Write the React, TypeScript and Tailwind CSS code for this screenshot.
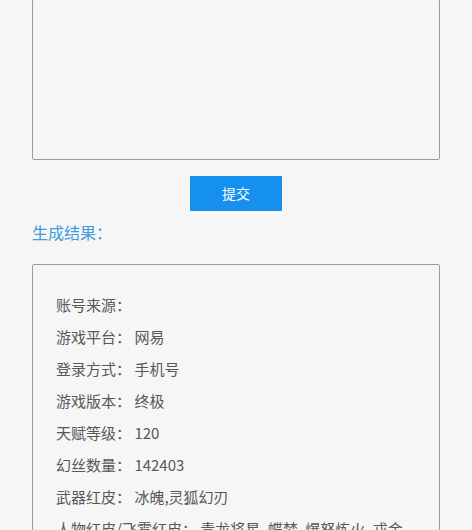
import React from 'react'

const rows = [
    { label: "账号来源", value: "" },
    { label: "游戏平台", value: "网易" },
    { label: "登录方式", value: "手机号" },
    { label: "游戏版本", value: "终极" },
    { label: "天赋等级", value: "120" },
    { label: "幻丝数量", value: "142403" },
    { label: "武器红皮", value: "冰魄,灵狐幻刃" },
    { label: "人物红皮/飞雾红皮", value: "青龙将星, 蝶梦, 爆怒炼火, 戎金" },
];

export default function App() {
    return (
        <div
            className="h-[530px] overflow-hidden bg-[#f6f6f6] px-8"
            style={{ fontFamily: '"Noto Sans CJK SC", "Noto Sans", sans-serif' }}
        >
            <textarea
                className="block w-full h-[161px] -mt-[1px] resize-none border border-[#9c9c9c] rounded-[2px] bg-[#f6f6f6] outline-none"
            />

            <div className="flex justify-center mt-[16px]">
                <button className="w-[92px] h-[35px] bg-[#1590ee] text-white text-[14px] rounded-[1px]">
                    提交
                </button>
            </div>

            <div className="mt-[9px] h-[24px] leading-[24px] text-[16px] text-[#3f9ade]">
                生成结果：
            </div>

            <div className="mt-[20px] border border-[#9c9c9c] rounded-[2px] px-[23px] pt-[24px] pb-4 text-[15px] text-[#585858]">
                {rows.map((row) => (
                    <div key={row.label} className="h-[32px] leading-[32px] whitespace-nowrap">
                        {row.label}：{row.value ? " " + row.value : ""}
                    </div>
                ))}
            </div>
        </div>
    );
}
